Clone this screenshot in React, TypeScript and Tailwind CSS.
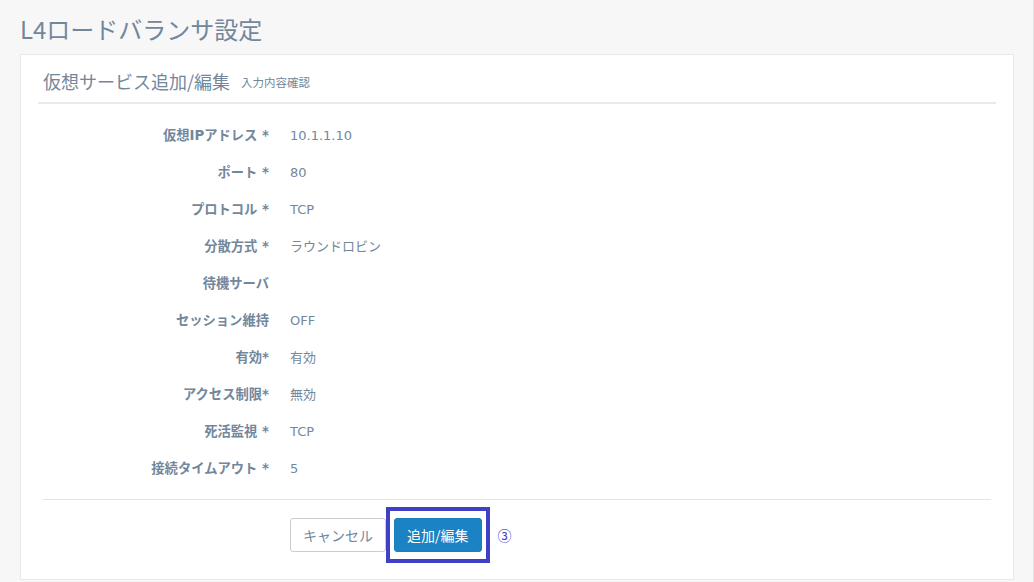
import React from "react";

const rows: [string, string][] = [
  ["仮想IPアドレス *", "10.1.1.10"],
  ["ポート *", "80"],
  ["プロトコル *", "TCP"],
  ["分散方式 *", "ラウンドロビン"],
  ["待機サーバ", ""],
  ["セッション維持", "OFF"],
  ["有効*", "有効"],
  ["アクセス制限*", "無効"],
  ["死活監視 *", "TCP"],
  ["接続タイムアウト *", "5"],
];

export default function App() {
  return (
    <div
      className="w-[1034px] h-[582px] overflow-hidden bg-[#f7f7f7] border-r border-[#e4e4e4] text-[#73879c] px-[20px] pt-[14px]"
      style={{ fontFamily: '"Noto Sans CJK JP", "Noto Sans", sans-serif' }}
    >
      <h1 className="h-[30px] leading-[30px] text-[24px] font-normal mb-[10px] tracking-[0px]">
        L4ロードバランサ設定
      </h1>
      <div className="w-[994px] bg-white border border-[#e6e9ed] px-[17px] pt-[10px] pb-[16px]">
        <div className="border-b-2 border-[#e6e9ed] px-[5px] pb-[5px] h-[39px] flex items-center">
          <span className="text-[18px] leading-[32px]">仮想サービス追加/編集</span>
          <span className="text-[11.5px] ml-[11px] mt-[3px]">入力内容確認</span>
        </div>
        <div
          className="pt-[13px]"
          style={{ fontFamily: '"DejaVu Sans", "Noto Sans CJK JP", sans-serif' }}
        >
          {rows.map(([label, value]) => (
            <div key={label} className="h-[37px] flex items-center text-[13px]">
              <div className="w-[232px] text-right font-bold pr-[1px] text-[13.3px]">{label}</div>
              <div className="ml-[20px]">{value}</div>
            </div>
          ))}
        </div>
        <div className="mx-[5px] mt-[12px] border-t border-[#e5e5e5]" />
        <div className="mt-[7px] flex items-center pl-[252px]">
          <button className="h-[34px] px-[12px] border border-[#cccccc] rounded-[3px] bg-white text-[14px] text-[#73879c]">
            キャンセル
          </button>
          <div className="border-4 border-[#3f40c6] px-[4px] py-[7px]">
            <button className="h-[34px] px-[12px] border border-[#1a7fbf] rounded-[3px] bg-[#1b82c4] text-[14px] text-white">
              追加/編集
            </button>
          </div>
          <span className="ml-[8px] text-[14px] text-[#3f40c6]">③</span>
        </div>
      </div>
    </div>
  );
}
